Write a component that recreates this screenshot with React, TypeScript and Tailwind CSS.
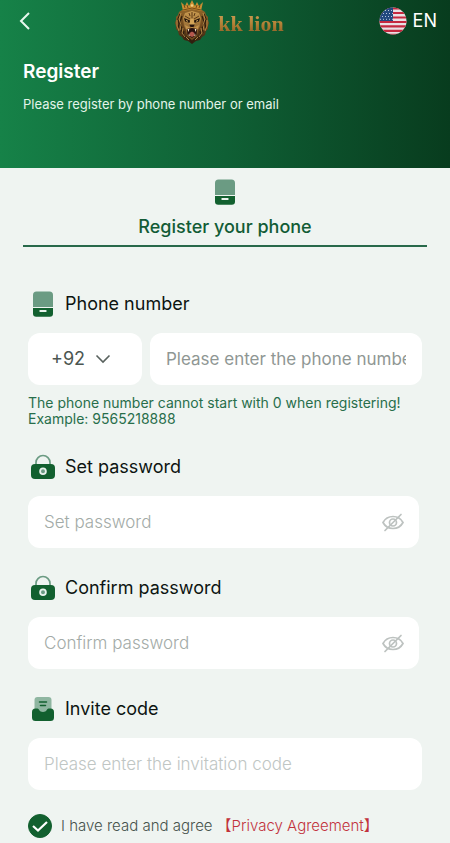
import { useState } from "react";
import type { ReactNode } from "react";

function LionLogo() {
  return (
    <svg viewBox="0 0 36 46" className="h-[46px] w-9 shrink-0" aria-hidden="true">
      <defs>
        <linearGradient id="mane" x1="0" y1="0" x2="0" y2="1">
          <stop offset="0" stopColor="#94682b" />
          <stop offset="0.5" stopColor="#6f481d" />
          <stop offset="1" stopColor="#2c1c0e" />
        </linearGradient>
        <linearGradient id="face" x1="0" y1="0" x2="0" y2="1">
          <stop offset="0" stopColor="#c99a4f" />
          <stop offset="1" stopColor="#70481f" />
        </linearGradient>
      </defs>
      <path d="M8 10 5 12 4 15 2 17 2 20 1 23 2 26 2 29 4 31 5 35 8 37 10 40 14 41 18 44 22 41 26 40 28 37 31 35 32 31 34 29 34 26 35 23 34 20 34 17 32 15 31 12 28 10 18 8Z" fill="url(#mane)" />
      <path d="M6 14 4 19 5 24 4 28M8 16 6 22 8 29 7 33M10 31 9 35 12 38M30 14 32 19 31 24 32 28M28 16 30 22 28 29 29 33M26 31 27 35 24 38M14 38 18 42 22 38" fill="none" stroke="#2f1e0e" strokeWidth="1.200" />
      <path d="M7 13 5 19 7 25 6 30M3 20 3 26 5 31M9 28 8 33 11 37M29 13 31 19 29 25 30 30M33 20 33 26 31 31M27 28 28 33 25 37M12 37 15 40M24 37 21 40" fill="none" stroke="#c79750" strokeWidth="0.800" />
      <path d="M11 13 18 11 25 13 27 18 26 26 24 30 23 36 18 40 13 36 12 30 10 26 9 18Z" fill="url(#face)" />
      <path d="M7 2 11 6 13 2 15 6 18 0 21 6 23 2 25 6 29 2 27 11 18 9 9 11Z" fill="#c98e32" />
      <path d="M9 10 18 8 27 10M11 8 10 5M14 8 13 5M22 8 23 5M25 8 26 5" fill="none" stroke="#6c4214" strokeWidth="0.900" />
      <circle cx="18" cy="5.500" r="1.300" fill="#f2cf83" />
      <path d="M10 18 16 20.500 16 23 11 21.500ZM26 18 20 20.500 20 23 25 21.500Z" fill="#22140a" />
      <path d="M12 20.500 14 21.300M24 20.500 22 21.300" stroke="#eec070" strokeWidth="0.900" />
      <path d="M11 16 16 19M25 16 20 19M18 12V18M15 13 16 16M21 13 20 16" fill="none" stroke="#5d3a17" strokeWidth="1" />
      <path d="M16.500 19 15 25 18 28 21 25 19.500 19Z" fill="#d3a458" />
      <path d="M15 24.500H21L19.500 27H16.500Z" fill="#25150e" />
      <path d="M11 25 15 27 17 28 12 29ZM25 25 21 27 19 28 24 29Z" fill="#c3924b" />
      <path d="M13 29 18 28 23 29 22.500 35 18 38 13.500 35Z" fill="#28100e" />
      <path d="M15.500 33 18 31.500 20.500 33 20 36 18 37 16 36Z" fill="#b5584d" />
      <path d="M13.500 29H15.300L14.500 32ZM20.700 29H22.500L21.500 32ZM14.500 35.500 15 33.500 16 36ZM21.500 35.500 21 33.500 20 36Z" fill="#f1e2c2" />
    </svg>
  );
}

function FlagIcon() {
  return (
    <svg viewBox="0 0 28 28" className="size-7" aria-hidden="true">
      <clipPath id="flag-round">
        <circle cx="14" cy="14" r="13.500" />
      </clipPath>
      <g clipPath="url(#flag-round)">
        <rect width="28" height="28" fill="#e9dfe3" />
        <path d="M0 1.500H28M0 6H28M0 10.500H28M0 15H28M0 19.400H28M0 23.800H28M0 27.800H28" stroke="#c4283f" strokeWidth="2.200" />
        <rect width="14" height="14" fill="#22497f" />
        <path d="M3 3.500H14M1 6.500H14M3 9.500H14M1 12.300H14" stroke="#b9c8df" strokeWidth="1" strokeDasharray="1 2" />
      </g>
    </svg>
  );
}

function PhoneIcon() {
  return (
    <svg viewBox="0 0 26 26" className="size-[26px]" aria-hidden="true">
      <path d="M3 16V4a3.500 3.500 0 0 1 3.500-3.500h13A3.500 3.500 0 0 1 23 4V16Z" fill="#6b9b83" />
      <path d="M3 17H23v5.500a3.200 3.200 0 0 1-3.200 3.200H6.200A3.200 3.200 0 0 1 3 22.500Z" fill="#12602f" />
      <rect x="9.500" y="19" width="7" height="2" rx="0.600" fill="#e8f2ec" />
    </svg>
  );
}

function LockIcon() {
  return (
    <svg viewBox="0 0 26 26" className="size-[26px]" aria-hidden="true">
      <path d="M6 12V8.500a7 7 0 0 1 14 0V12" fill="none" stroke="#6b9b83" strokeWidth="1.700" />
      <rect x="1" y="10" width="24" height="15" rx="4" fill="#12602f" />
      <circle cx="13" cy="17.300" r="2.900" fill="#6b9b83" stroke="#e8f2ec" strokeWidth="1.800" />
    </svg>
  );
}

function InviteIcon() {
  return (
    <svg viewBox="0 0 26 26" className="size-[26px]" aria-hidden="true">
      <rect x="4.500" y="1" width="17" height="18" rx="3" fill="#8fb6a1" />
      <path d="M9.500 6H16.500M10.500 9.500H15.500" stroke="#12602f" strokeWidth="1.500" strokeLinecap="round" />
      <path d="M2 16a3.500 3.500 0 0 1 3.500-3.500h2c1.500 0 1.700 3.500 5.500 3.500s4-3.500 5.500-3.500h2A3.500 3.500 0 0 1 24 16v5.500a3.500 3.500 0 0 1-3.500 3.500h-15A3.500 3.500 0 0 1 2 21.500Z" fill="#12602f" />
    </svg>
  );
}

function EyeOffIcon() {
  return (
    <svg viewBox="0 0 24 24" className="size-6" fill="none" stroke="#bdc2c0" strokeWidth="1.700" strokeLinecap="round" aria-hidden="true">
      <path d="M2 12.500C4 8.800 7.700 6.500 12 6.500s8 2.300 10 6C20 16.200 16.300 18.500 12 18.500S4 16.200 2 12.500Z" />
      <circle cx="12" cy="12.500" r="3.500" />
      <path d="M20 4.500 4 20.500" />
    </svg>
  );
}

function FieldLabel({ id, icon, children }: { id: string; icon: ReactNode; children: ReactNode }) {
  return (
    <label htmlFor={id} className="flex h-7 items-center gap-[9px] pl-[2px] text-lg text-[#0d1411]">
      {icon}
      {children}
    </label>
  );
}

function PasswordField({ id, label }: { id: string; label: string }) {
  const [visible, setVisible] = useState(false);
  return (
    <div className="flex flex-col gap-[15px]">
      <FieldLabel id={id} icon={<LockIcon />}>{label}</FieldLabel>
      <div className="mr-[3px] flex h-[52px] items-center rounded-xl bg-white pr-[14px]">
        <input
          id={id}
          type={visible ? "text" : "password"}
          placeholder={label}
          className="h-full min-w-0 flex-1 bg-transparent pl-4 text-[17px] font-light outline-none placeholder:text-[#a3aba7]"
        />
        <button type="button" aria-label="Toggle password visibility" onClick={() => setVisible(!visible)}>
          <EyeOffIcon />
        </button>
      </div>
    </div>
  );
}

export default function App() {
  return (
    <div className="min-h-screen bg-[#eff4f1] font-['Inter','Noto_Sans_CJK_SC',sans-serif]">
      <header className="h-[168px] bg-linear-to-r from-[#168248] via-[#0f6035] to-[#083c1e] text-white">
        <div className="grid h-11 grid-cols-3 items-center px-[13px]">
          <button type="button" aria-label="Back" className="mb-1 w-6">
            <svg viewBox="0 0 24 24" className="size-6" fill="none" stroke="#e8f8ee" strokeWidth="2" aria-hidden="true">
              <path d="M16 4 8 12 16 20" />
            </svg>
          </button>
          <div className="flex items-center justify-center gap-2 pl-2">
            <LionLogo />
            <span className="bg-linear-to-b from-[#d9b066] via-[#b58237] to-[#79501d] bg-clip-text font-['Liberation_Serif',serif] text-[22px] font-bold whitespace-nowrap text-transparent">
              kk lion
            </span>
          </div>
          <button type="button" className="mb-1 flex items-center gap-[6px] justify-self-end text-lg">
            <FlagIcon />
            EN
          </button>
        </div>
        <div className="px-[23px] pt-4">
          <h1 className="text-[19px] leading-6 font-semibold">Register</h1>
          <p className="mt-[10px] text-[13px] leading-5 text-[#e3f4e9]">Please register by phone number or email</p>
        </div>
      </header>

      <main>
        <div role="tablist" className="mx-[23px] border-b-2 border-[#28694a]">
          <button type="button" role="tab" aria-selected="true" className="flex w-full flex-col items-center gap-2 pt-[11px] pb-1 text-lg font-medium text-[#125c36]">
            <PhoneIcon />
            Register your phone
          </button>
        </div>

        <form className="mt-[43px] flex flex-col gap-[26px] px-7">
          <div className="flex flex-col">
            <FieldLabel id="phone" icon={<PhoneIcon />}>Phone number</FieldLabel>
            <div className="mt-[15px] flex gap-2">
              <div className="relative w-[114px] shrink-0">
                <select aria-label="Country code" className="h-[52px] w-full appearance-none rounded-xl bg-white pl-[23px] text-lg text-[#4c5651] outline-none">
                  <option>+92</option>
                </select>
                <svg viewBox="0 0 16 10" className="pointer-events-none absolute top-[21px] right-[31px] h-[10px] w-4" fill="none" stroke="#59625e" strokeWidth="1.600" aria-hidden="true">
                  <path d="M1.500 1.500 8 8 14.500 1.500" />
                </svg>
              </div>
              <input id="phone" type="tel" placeholder="Please enter the phone number" className="h-[52px] min-w-0 flex-1 rounded-xl bg-white px-4 text-[17px] outline-none placeholder:text-[#8f9794]" />
            </div>
            <p className="mt-[10px] text-sm leading-4 text-[#286e4b]">
              The phone number cannot start with 0 when registering!
              <br />
              Example: 9565218888
            </p>
          </div>

          <PasswordField id="password" label="Set password" />
          <PasswordField id="confirm" label="Confirm password" />

          <div className="flex flex-col gap-[15px]">
            <FieldLabel id="invite" icon={<InviteIcon />}>Invite code</FieldLabel>
            <input id="invite" type="text" placeholder="Please enter the invitation code" className="h-[52px] w-full rounded-xl bg-white px-4 text-[17px] font-light outline-none placeholder:text-[#c0c6c4]" />
          </div>

          <div className="-mt-[2px] flex h-6 items-center text-[15px] font-light text-[#46524c]">
            <label className="flex items-center gap-[9px]">
              <span className="relative size-6">
                <input type="checkbox" defaultChecked className="peer block size-6 appearance-none rounded-full border border-[#12602f] checked:bg-[#12602f]" />
                <svg viewBox="0 0 24 24" className="pointer-events-none absolute inset-0 hidden size-6 peer-checked:block" fill="none" stroke="#ffffff" strokeWidth="2.200" aria-hidden="true">
                  <path d="M5 12 10 16.500 19 8" />
                </svg>
              </span>
              I have read and agree
            </label>
            <a href="#privacy" className="ml-1 whitespace-nowrap text-[#c2323c]">【Privacy Agreement】</a>
          </div>
        </form>
      </main>
    </div>
  );
}
